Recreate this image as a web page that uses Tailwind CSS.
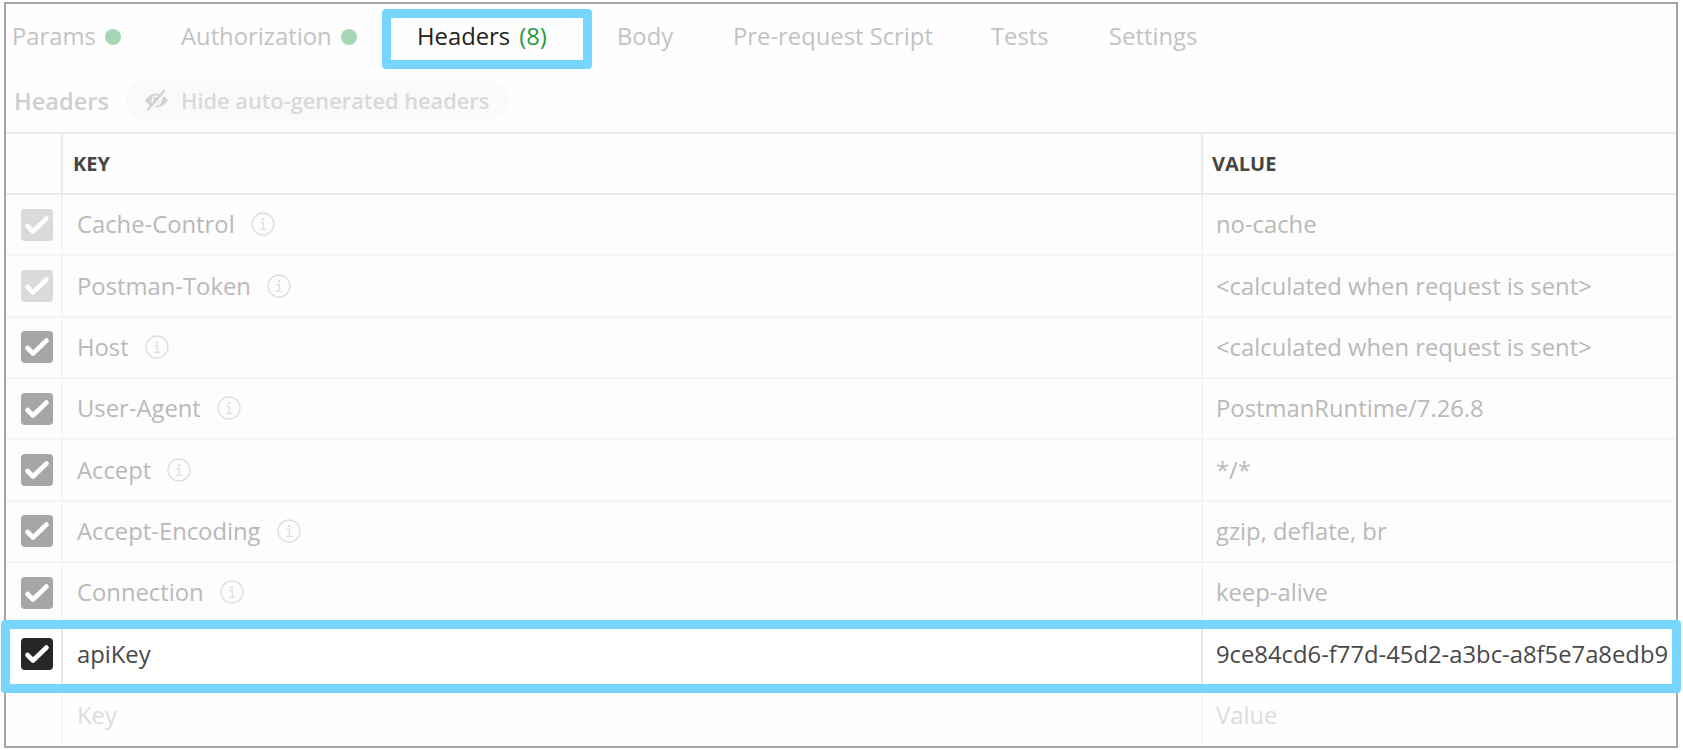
<!DOCTYPE html>
<html lang="en">
<head>
<meta charset="utf-8">
<title>Request headers</title>
<script src="https://cdn.jsdelivr.net/npm/@tailwindcss/browser@4"></script>
</head>
<body class="relative h-[750px] w-[1683px] overflow-hidden bg-white font-['Open_Sans','Noto_Sans',sans-serif] text-[23.8px] leading-[32px] text-[#bdbdbd]">
<svg class="hidden">
  <symbol id="check" viewBox="0 0 32 32"><path d="M6.500 17 L12 22.500 L25.500 9.500" fill="none" stroke="#fff" stroke-width="4.600" stroke-linecap="round" stroke-linejoin="round"/></symbol>
  <symbol id="info" viewBox="0 0 24 24"><circle cx="12" cy="12" r="11" fill="none" stroke="currentColor" stroke-width="1.3"/><path d="M9.500 10.500 H12.300 V17.300 M9 17.300 H15.400" fill="none" stroke="currentColor" stroke-width="1.3"/><circle cx="12" cy="7.200" r="1.300" fill="currentColor"/></symbol>
</svg>
<main class="ml-1 flex h-[746px] w-[1674px] translate-y-[2px] flex-col overflow-hidden border-2 border-[#a5a5a5] bg-[#fefefe]">
  <nav class="flex h-[66px] shrink-0 items-center pb-[2px] pl-[6px] whitespace-nowrap text-[#c3c3c3]">
    <div class="flex w-[169px] items-center gap-[9px]"><span>Params</span><i class="mt-[2px] size-4 rounded-full bg-[#a5d7b4]"></i></div>
    <div class="flex w-[236px] items-center gap-[9px]"><span>Authorization</span><i class="mt-[2px] size-4 rounded-full bg-[#a5d7b4]"></i></div>
    <div class="flex w-[200px] gap-[9px] text-[#212121]"><span>Headers</span><span class="text-[#1e9a41]">(8)</span></div>
    <div class="w-[116px]">Body</div>
    <div class="w-[258px]">Pre-request Script</div>
    <div class="w-[118px]">Tests</div>
    <div>Settings</div>
  </nav>
  <div class="flex h-[62px] shrink-0 items-center pl-[8px] font-semibold text-[#cfcfcf]">
    <div class="w-[112px] shrink-0 text-[23.6px]">Headers</div>
    <div class="mb-[2px] flex h-10 w-[383px] shrink-0 items-center rounded-full bg-[#fafafa] pl-[18px] text-[21.8px] text-[#d9d9d9]">
      <svg class="mr-[12px] h-[24px] w-[25px] shrink-0" viewBox="0 0 25 24"><path d="M1 12.500 C4.500 7.500 8.500 5.800 12.500 5.800 S20.500 7.500 24 12.500 C20.500 17.500 16.500 19.200 12.500 19.200 S4.500 17.500 1 12.500Z" fill="#d2d2d2"/><circle cx="12.500" cy="12.500" r="4.300" fill="none" stroke="#fafafa" stroke-width="1.700"/><path d="M5.500 23.300 L22.500 4" stroke="#fafafa" stroke-width="2.200"/><path d="M3.500 22 L20.800 2" stroke="#d2d2d2" stroke-width="2.300"/></svg>
      <span class="pt-[2px] whitespace-nowrap">Hide auto-generated headers</span>
    </div>
  </div>
  <section class="grid shrink-0 auto-rows-[61.35px] grid-cols-[55px_1140px_1fr] grid-rows-[63px] whitespace-nowrap text-[#b9b9b9] [&>*]:flex [&>*]:items-center [&>*]:border-[#f5f5f5]">
    <div class="border-y-2 border-[#eaeaea]!"></div>
    <div class="border-y-2 border-l-2 border-[#eaeaea]! pl-[10px] text-[20px] font-bold text-[#454545]">KEY</div>
    <div class="border-y-2 border-l-2 border-[#eaeaea]! pl-[9px] text-[20px] font-bold text-[#454545]">VALUE</div>

    <div class="border-b-2 bg-[#fdfdfd] pl-[15px]"><svg class="size-8 rounded bg-[#dadada]"><use href="#check"/></svg></div>
    <div class="gap-[16px] border-b-2 border-l-2 bg-[#fdfdfd] pb-px pl-[14px]">Cache-Control<svg class="size-6 text-[#dedede]"><use href="#info"/></svg></div>
    <div class="border-b-2 border-l-2 bg-[#fdfdfd] pb-px pl-[13px]">no-cache</div>

    <div class="border-b-2 bg-[#fdfdfd] pl-[15px]"><svg class="size-8 rounded bg-[#dadada]"><use href="#check"/></svg></div>
    <div class="gap-[16px] border-b-2 border-l-2 bg-[#fdfdfd] pb-px pl-[14px]">Postman-Token<svg class="size-6 text-[#dedede]"><use href="#info"/></svg></div>
    <div class="border-b-2 border-l-2 bg-[#fdfdfd] pb-px pl-[13px]">&lt;calculated when request is sent&gt;</div>

    <div class="border-b-2 bg-[#fdfdfd] pl-[15px]"><svg class="size-8 rounded bg-[#a6a6a6]"><use href="#check"/></svg></div>
    <div class="gap-[16px] border-b-2 border-l-2 bg-[#fdfdfd] pb-px pl-[14px]">Host<svg class="size-6 text-[#dedede]"><use href="#info"/></svg></div>
    <div class="border-b-2 border-l-2 bg-[#fdfdfd] pb-px pl-[13px]">&lt;calculated when request is sent&gt;</div>

    <div class="border-b-2 bg-[#fdfdfd] pl-[15px]"><svg class="size-8 rounded bg-[#a6a6a6]"><use href="#check"/></svg></div>
    <div class="gap-[16px] border-b-2 border-l-2 bg-[#fdfdfd] pb-px pl-[14px]">User-Agent<svg class="size-6 text-[#dedede]"><use href="#info"/></svg></div>
    <div class="border-b-2 border-l-2 bg-[#fdfdfd] pb-px pl-[13px]">PostmanRuntime/7.26.8</div>

    <div class="border-b-2 bg-[#fdfdfd] pl-[15px]"><svg class="size-8 rounded bg-[#a6a6a6]"><use href="#check"/></svg></div>
    <div class="gap-[16px] border-b-2 border-l-2 bg-[#fdfdfd] pb-px pl-[14px]">Accept<svg class="size-6 text-[#dedede]"><use href="#info"/></svg></div>
    <div class="border-b-2 border-l-2 bg-[#fdfdfd] pb-px pl-[13px]">*/*</div>

    <div class="border-b-2 bg-[#fdfdfd] pl-[15px]"><svg class="size-8 rounded bg-[#a6a6a6]"><use href="#check"/></svg></div>
    <div class="gap-[16px] border-b-2 border-l-2 bg-[#fdfdfd] pb-px pl-[14px]">Accept-Encoding<svg class="size-6 text-[#dedede]"><use href="#info"/></svg></div>
    <div class="border-b-2 border-l-2 bg-[#fdfdfd] pb-px pl-[13px]">gzip, deflate, br</div>

    <div class="border-b-2 bg-[#fdfdfd] pl-[15px]"><svg class="size-8 rounded bg-[#a6a6a6]"><use href="#check"/></svg></div>
    <div class="gap-[16px] border-b-2 border-l-2 bg-[#fdfdfd] pb-px pl-[14px]">Connection<svg class="size-6 text-[#dedede]"><use href="#info"/></svg></div>
    <div class="border-b-2 border-l-2 bg-[#fdfdfd] pb-px pl-[13px]">keep-alive</div>

    <div class="border-b-2 bg-white pl-[15px]"><svg class="size-8 rounded bg-[#262626]"><use href="#check"/></svg></div>
    <div class="border-b-2 border-l-2 border-l-[#e8e8e8]! bg-white pb-px pl-[14px] text-[#484848]">apiKey</div>
    <div class="border-b-2 border-l-2 border-l-[#e8e8e8]! bg-white pb-px pl-[13px] text-[#484848]">9ce84cd6-f77d-45d2-a3bc-a8f5e7a8edb9</div>

    <div></div>
    <div class="border-l-2 pb-[2px] pl-[14px] text-[#dcdcdc]">Key</div>
    <div class="border-l-2 pb-[2px] pl-[13px] text-[#dcdcdc]">Value</div>
  </section>
</main>
<!-- Callout frames over the active tab and the apiKey row -->
<div class="absolute left-[382px] top-[9px] h-[60px] w-[210px] rounded border-[9px] border-[#76d6ff]"></div>
<div class="absolute left-[1px] top-[620px] h-[73px] w-[1680px] rounded border-[9px] border-[#76d6ff]"></div>
</body>
</html>
